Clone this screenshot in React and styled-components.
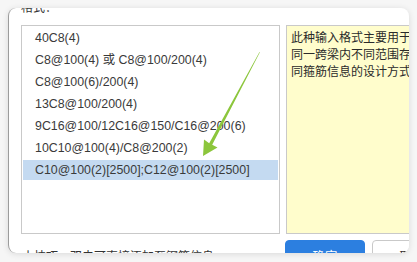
import React from 'react';
import styled, { createGlobalStyle } from 'styled-components';

const GlobalStyle = createGlobalStyle`
  html, body {
    margin: 0;
    padding: 0;
    background: #f6f6f6;
    overflow: hidden;
  }
  body {
    font-family: "Liberation Sans", "Noto Sans CJK SC", sans-serif;
  }
`;

// Page wrapper around the dialog card
const Page = styled.div`
  width: 417px;
  height: 262px;
  padding: 8px 0 0 8px;
  box-sizing: border-box;
`;

const Card = styled.div`
  position: relative;
  width: 401px;
  height: 245px;
  background: #fff;
  border-radius: 8px;
  border-left: 1px solid #9c9c9c;
  box-sizing: border-box;
  overflow: hidden;
  box-shadow: 0 1px 6px rgba(0, 0, 0, 0.12);
`;

const Content = styled.div`
  margin-top: -8px;
  padding-left: 12px;
  display: flex;
  flex-direction: column;
`;

const Label = styled.div`
  font-size: 12px;
  line-height: 17px;
  color: #333;
  margin-bottom: 8px;
`;

const Main = styled.div`
  display: flex;
  gap: 6px;
  height: 209px;
  width: 430px;
`;

const ListBox = styled.div`
  position: relative;
  width: 259px;
  flex-shrink: 0;
  border: 1px solid #c9c9c9;
  box-sizing: border-box;
  padding: 2px 1px 0;
`;

const Item = styled.div`
  height: 20px;
  line-height: 20px;
  margin-bottom: 2px;
  padding-left: 12px;
  font-size: 12.4px;
  color: #3a3a3a;
  white-space: nowrap;
  background: ${(p) => (p.$selected ? '#c4daf1' : 'transparent')};
`;

const Hint = styled.div`
  width: 160px;
  flex-shrink: 0;
  border: 1px solid #c9c9c9;
  box-sizing: border-box;
  background: #fffdcc;
  padding: 4px 6px 0 4px;
  font-size: 12px;
  line-height: 17px;
  color: #2a2a2a;
`;

const Footer = styled.div`
  display: flex;
  align-items: center;
  margin-top: 6px;
  height: 30px;
  width: 440px;
`;

const Tip = styled.div`
  width: 264px;
  flex-shrink: 0;
  padding-left: 1px;
  box-sizing: border-box;
  font-size: 12px;
  color: #333;
  white-space: nowrap;
`;

const Button = styled.div`
  width: 80px;
  height: 30px;
  flex-shrink: 0;
  box-sizing: border-box;
  border-radius: 4px;
  display: flex;
  align-items: center;
  justify-content: center;
  font-size: 12.5px;
  margin-right: 7px;
  color: ${(p) => (p.$primary ? '#fff' : '#333')};
  background: ${(p) => (p.$primary ? '#2c7fe0' : '#fff')};
  border: 1px solid ${(p) => (p.$primary ? '#2c7fe0' : '#c9c9c9')};
`;

const Arrow = styled.svg`
  position: absolute;
  left: 0;
  top: 0;
  pointer-events: none;
`;

const formats = [
  '40C8(4)',
  'C8@100(4) 或 C8@100/200(4)',
  'C8@100(6)/200(4)',
  '13C8@100/200(4)',
  '9C16@100/12C16@150/C16@200(6)',
  '10C10@100(4)/C8@200(2)',
  'C10@100(2)[2500];C12@100(2)[2500]',
];

// Arrow coordinates are relative to the list box
const GreenArrow = () => (
  <Arrow width="257" height="207" viewBox="0 0 257 207">
    <polygon
      points="237.5,26 237.9,26.2 190.2,118.8 195.5,121.6 181,130 182,113.4 187.2,117.2"
      fill="#8cc63c"
    />
  </Arrow>
);

const App = () => (
  <>
    <GlobalStyle />
    <Page>
      <Card>
        <Content>
          <Label>格式：</Label>
          <Main>
            <ListBox>
              {formats.map((f, i) => (
                <Item key={f} $selected={i === formats.length - 1}>
                  {f}
                </Item>
              ))}
              <GreenArrow />
            </ListBox>
            <Hint>此种输入格式主要用于表示同一跨梁内不同范围存在不同箍筋信息的设计方式</Hint>
          </Main>
          <Footer>
            <Tip>小技巧：双击可直接添加至钢筋信息</Tip>
            <Button $primary>确定</Button>
            <Button>取消</Button>
          </Footer>
        </Content>
      </Card>
    </Page>
  </>
);

export default App;
